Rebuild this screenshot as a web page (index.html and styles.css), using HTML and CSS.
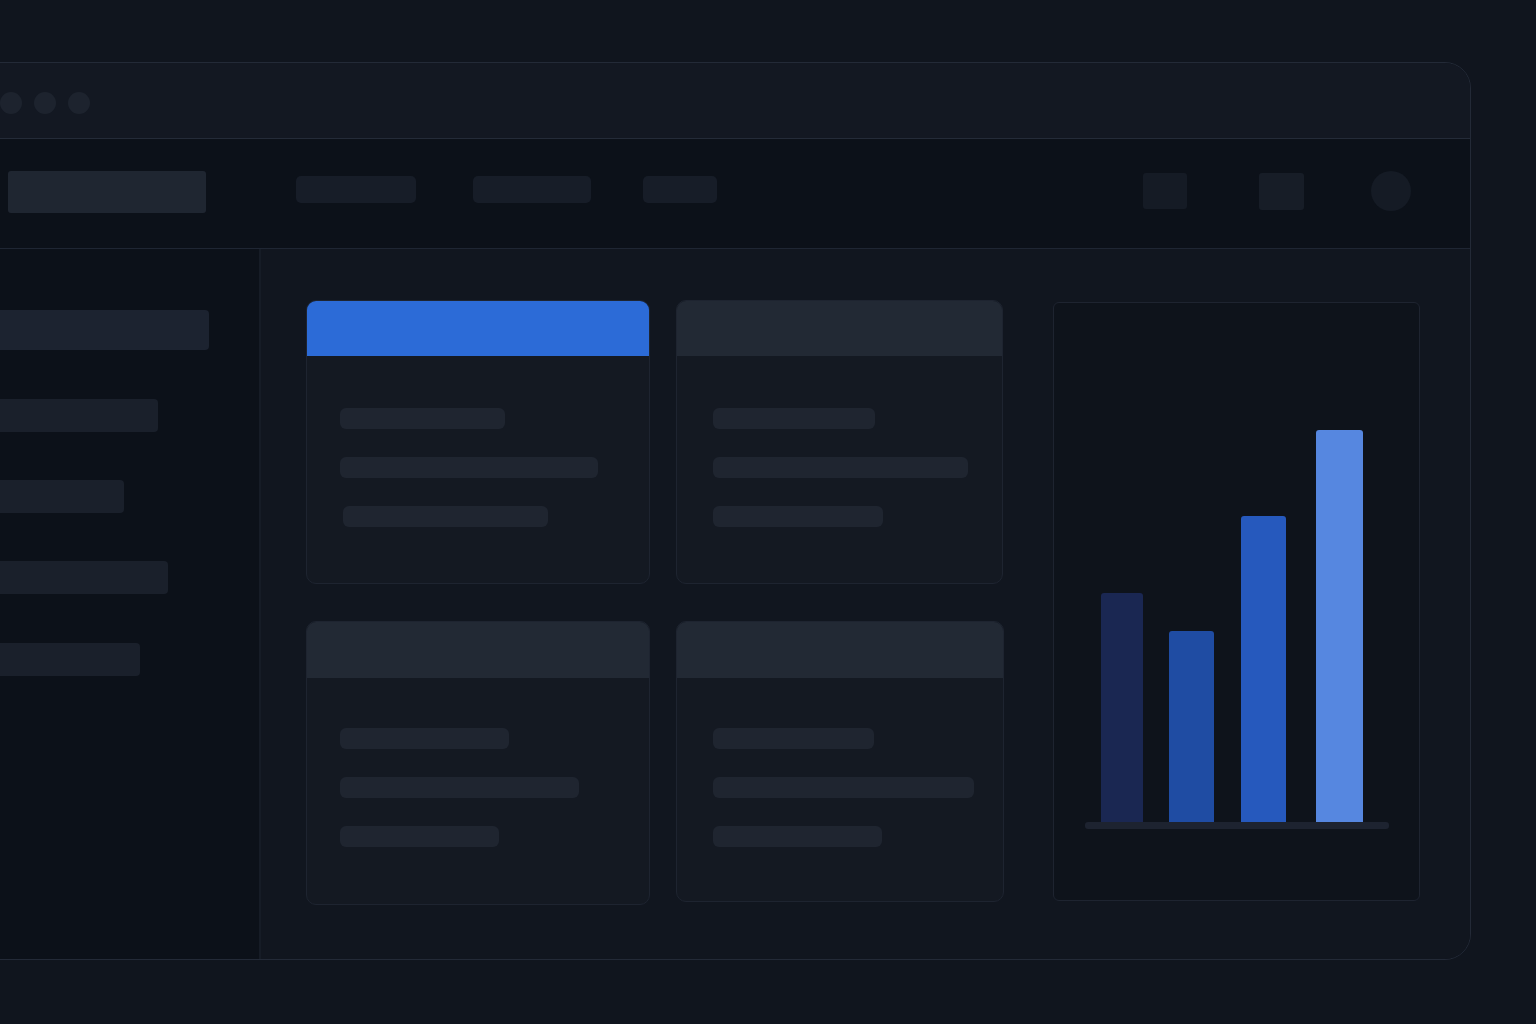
FILE: index.html
```html
<!DOCTYPE html>
<html lang="en">
<head>
<meta charset="utf-8">
<title>Dashboard</title>
<link rel="stylesheet" href="styles.css">
</head>
<body>
<div class="page">
  <div class="window">
    <div class="titlebar">
      <span class="dot"></span><span class="dot"></span><span class="dot"></span>
    </div>
    <div class="navbar">
      <div class="logo"></div>
      <div class="links">
        <span class="pill w120"></span>
        <span class="pill w118"></span>
        <span class="pill w74"></span>
      </div>
      <div class="actions">
        <span class="sq"></span>
        <span class="sq sq2"></span>
        <span class="avatar"></span>
      </div>
    </div>
    <div class="body">
      <aside class="sidebar">
        <div class="side-item big"></div>
        <div class="side-item s2"></div>
        <div class="side-item s3"></div>
        <div class="side-item s4"></div>
        <div class="side-item s5"></div>
      </aside>
      <main class="main">
        <div class="cards">
          <div class="card">
            <div class="card-head blue"></div>
            <div class="card-body">
              <div class="line" style="width:165px"></div>
              <div class="line" style="width:258px"></div>
              <div class="line l3" style="width:205px"></div>
            </div>
          </div>
          <div class="card">
            <div class="card-head"></div>
            <div class="card-body b2">
              <div class="line" style="width:162px"></div>
              <div class="line" style="width:255px"></div>
              <div class="line" style="width:170px"></div>
            </div>
          </div>
          <div class="card">
            <div class="card-head tall"></div>
            <div class="card-body b3">
              <div class="line" style="width:169px"></div>
              <div class="line" style="width:239px"></div>
              <div class="line" style="width:159px"></div>
            </div>
          </div>
          <div class="card c4">
            <div class="card-head tall"></div>
            <div class="card-body b2 b3">
              <div class="line" style="width:161px"></div>
              <div class="line" style="width:261px"></div>
              <div class="line" style="width:169px"></div>
            </div>
          </div>
        </div>
        <div class="chart">
          <div class="plot">
            <div class="bar bar1" style="height:229px"></div>
            <div class="bar bar2" style="height:191px"></div>
            <div class="bar bar3" style="height:306px"></div>
            <div class="bar bar4" style="height:392px"></div>
          </div>
          <div class="axis"></div>
        </div>
      </main>
    </div>
  </div>
</div>
</body>
</html>
```
FILE: styles.css
```css
html, body {
  margin: 0;
  padding: 0;
  background: #10151e;
  font-family: "Inter", "Liberation Sans", sans-serif;
  overflow: hidden;
}
.page {
  width: 1536px;
  height: 1024px;
  padding-top: 62px;
  box-sizing: border-box;
  background: #10151e;
}
.window {
  margin-left: -40px;
  width: 1511px;
  height: 898px;
  box-sizing: border-box;
  border: 1px solid #232a37;
  border-radius: 26px;
  overflow: hidden;
  background: #10151e;
  display: flex;
  flex-direction: column;
}
.titlebar {
  height: 76px;
  flex: none;
  background: #131822;
  border-bottom: 1px solid #242b38;
  display: flex;
  align-items: center;
  gap: 12px;
  padding-left: 39px;
  padding-top: 4px;
  box-sizing: border-box;
}
.dot {
  width: 22px;
  height: 22px;
  border-radius: 50%;
  background: #1d232e;
}
.navbar {
  height: 110px;
  flex: none;
  background: #0c1119;
  border-bottom: 1px solid #1f2633;
  display: flex;
  align-items: center;
  padding-left: 47px;
  padding-right: 59px;
  box-sizing: border-box;
}
.logo {
  width: 198px;
  height: 42px;
  border-radius: 3px;
  background: #1f2631;
  margin-top: -4px;
}
.links {
  display: flex;
  margin-left: 90px;
  margin-top: -9px;
}
.pill {
  height: 27px;
  border-radius: 5px;
  background: #171d28;
}
.w120 { width: 120px; }
.w118 { width: 118px; margin-left: 57px; }
.w74 { width: 74px; margin-left: 52px; }
.actions {
  margin-left: auto;
  display: flex;
  align-items: center;
  margin-top: -5px;
}
.sq {
  width: 44px;
  height: 36px;
  border-radius: 3px;
  background: #151b25;
}
.sq2 { margin-left: 72px; width: 45px; height: 37px; background: #171d27; }
.avatar {
  width: 40px;
  height: 40px;
  border-radius: 50%;
  background: #151b25;
  margin-left: 67px;
}
.body {
  flex: 1;
  display: flex;
  min-height: 0;
}
.sidebar {
  width: 300px;
  flex: none;
  background: #0c1119;
  border-right: 2px solid #161c26;
  box-sizing: border-box;
  padding-top: 61px;
  padding-left: 24px;
}
.side-item {
  height: 33px;
  border-radius: 4px;
  background: #1a202b;
  margin-bottom: 48px;
}
.side-item.big { height: 40px; width: 224px; background: #1c2330; margin-bottom: 49px; }
.s2 { width: 173px; }
.s3 { width: 139px; }
.s4 { width: 183px; margin-bottom: 49px; }
.s5 { width: 155px; }
.main {
  flex: 1;
  display: flex;
  align-items: flex-start;
  padding-top: 51px;
  padding-left: 45px;
  background: #11161f;
}
.cards {
  display: grid;
  grid-template-columns: 344px 327px;
  grid-template-rows: 284px 284px;
  column-gap: 26px;
  row-gap: 37px;
}
.card {
  border: 1px solid #1e2430;
  border-radius: 10px;
  background: #141922;
  overflow: hidden;
  box-sizing: border-box;
}
.card.c4 { height: 281px; width: 328px; }
.card-head {
  height: 55px;
  background: #222934;
}
.card-head.blue { background: #2c6bd7; }
.card-head.tall { height: 56px; }
.card-body {
  padding: 52px 0 0 33px;
  display: flex;
  flex-direction: column;
  gap: 28px;
}
.card-body.b2 { padding-left: 36px; }
.card-body.b3 { padding-top: 50px; }
.line {
  height: 21px;
  border-radius: 6px;
  background: #1f2530;
}
.line.l3 { margin-left: 3px; }
.chart {
  width: 367px;
  height: 599px;
  margin-left: 50px;
  margin-top: 2px;
  border: 1px solid #1e2430;
  border-radius: 6px;
  background: #0e131b;
  box-sizing: border-box;
  padding-left: 31px;
}
.plot {
  height: 519px;
  display: flex;
  align-items: flex-end;
  padding-left: 16px;
}
.bar {
  border-radius: 3px 3px 0 0;
}
.bar1 { width: 42px; background: #1a2752; }
.bar2 { width: 45px; margin-left: 26px; background: #1f4ca3; }
.bar3 { width: 45px; margin-left: 27px; background: #2659bd; }
.bar4 { width: 47px; margin-left: 30px; background: #5687e0; }
.axis {
  width: 304px;
  height: 7px;
  border-radius: 3px;
  background: #1d2330;
}
```
